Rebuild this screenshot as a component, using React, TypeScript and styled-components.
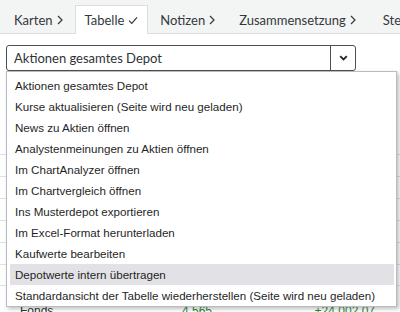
import React from 'react';
import styled, { createGlobalStyle } from 'styled-components';

const GlobalStyle = createGlobalStyle`
  html, body {
    margin: 0;
    padding: 0;
    background: #ffffff;
    overflow: hidden;
  }
  * {
    box-sizing: border-box;
  }
`;

const Page = styled.div`
  width: 400px;
  height: 312px;
  overflow: hidden;
  position: relative;
  font-family: Lato, 'Liberation Sans', sans-serif;
  color: #2f3336;
`;

const TabBar = styled.div`
  display: flex;
  align-items: flex-end;
  height: 34px;
  padding-left: 2px;
  background: #f3f4f4;
  border-bottom: 1px solid #dcdedf;
  white-space: nowrap;
`;

const Tab = styled.div<{ $active?: boolean }>`
  display: flex;
  align-items: center;
  gap: 4px;
  height: ${(p) => (p.$active ? '29px' : '28px')};
  margin-bottom: ${(p) => (p.$active ? '-1px' : '0')};
  padding: 0 ${(p) => (p.$active ? '9px' : '11px')};
  background: ${(p) => (p.$active ? '#ffffff' : 'transparent')};
  border: 1px solid ${(p) => (p.$active ? '#dcdedf' : 'transparent')};
  border-bottom: none;
  font-size: 13px;
  color: #34393c;
  flex-shrink: 0;

  &:nth-child(4) {
    padding-right: 14px;
  }
`;

const Content = styled.div`
  position: relative;
  padding: 11px 6px 0 6px;
`;

const Select = styled.div`
  display: flex;
  width: 350px;
  height: 26px;
  border: 1px solid #4b5154;
  border-radius: 3px;
  background: #ffffff;
`;

const SelectValue = styled.div`
  flex: 1;
  display: flex;
  align-items: center;
  padding-left: 7px;
  font-size: 13px;
  color: #2f3336;
`;

const SelectToggle = styled.div`
  width: 25px;
  display: flex;
  align-items: center;
  justify-content: center;
  border-left: 1px solid #4b5154;
`;

const Table = styled.div`
  margin: 0 -6px;
  font-family: 'Liberation Sans', Arial, sans-serif;
  font-size: 12px;
`;

const TableRow = styled.div<{ $h: number }>`
  display: flex;
  align-items: center;
  height: ${(p) => p.$h}px;
  border-bottom: 1px solid #dfe1e2;
  padding: 0 20px;
`;

const Cell = styled.div<{ $w: number; $color?: string; $align?: string }>`
  width: ${(p) => p.$w}px;
  color: ${(p) => p.$color || '#2f3336'};
  text-align: ${(p) => p.$align || 'left'};
  flex-shrink: 0;
`;

const Menu = styled.ul`
  position: absolute;
  top: 37px;
  left: 6px;
  width: 391px;
  margin: 0;
  padding: 3px 2px 0 3px;
  list-style: none;
  background: #ffffff;
  border: 1px solid #b9bcbe;
  box-shadow: 2px 2px 4px rgba(0, 0, 0, 0.25);
  font-family: 'Liberation Sans', Arial, sans-serif;
  font-size: 11.6px;
  color: #1f1f1f;
`;

const MenuItem = styled.li<{ $highlight?: boolean }>`
  height: 21px;
  line-height: 21px;
  padding-left: 5px;
  white-space: nowrap;
  background: ${(p) => (p.$highlight ? '#e2e2e6' : 'transparent')};
`;

const Chevron = () => (
  <svg width="9" height="6" viewBox="0 0 9 6">
    <path d="M1.2 1.2 L4.5 4.4 L7.8 1.2" fill="none" stroke="#1f2326" strokeWidth="1.8" />
  </svg>
);

const TabArrow = () => (
  <svg width="6" height="10" viewBox="0 0 6 10">
    <path d="M1 1 L5 5 L1 9" fill="none" stroke="#34393c" strokeWidth="1.2" />
  </svg>
);

const Check = () => (
  <svg width="10" height="9" viewBox="0 0 10 9">
    <path d="M1 4.6 L3.8 7.4 L9 1.4" fill="none" stroke="#34393c" strokeWidth="1.2" />
  </svg>
);

const tabs = [
  { label: 'Karten', active: false },
  { label: 'Tabelle', active: true },
  { label: 'Notizen', active: false },
  { label: 'Zusammensetzung', active: false },
  { label: 'Steuern', active: false },
];

const items = [
  'Aktionen gesamtes Depot',
  'Kurse aktualisieren (Seite wird neu geladen)',
  'News zu Aktien öffnen',
  'Analystenmeinungen zu Aktien öffnen',
  'Im ChartAnalyzer öffnen',
  'Im Chartvergleich öffnen',
  'Ins Musterdepot exportieren',
  'Im Excel-Format herunterladen',
  'Kaufwerte bearbeiten',
  'Depotwerte intern übertragen',
  'Standardansicht der Tabelle wiederherstellen (Seite wird neu geladen)',
];

// rows sit behind the open menu; only their edges and the last row peek out
const rows = [
  { h: 84, name: '', a: '', b: '' },
  { h: 22, name: '', a: '', b: '' },
  { h: 22, name: '', a: '', b: '' },
  { h: 22, name: '', a: '', b: '' },
  { h: 22, name: '', a: '', b: '' },
  { h: 22, name: '', a: '', b: '' },
  { h: 21, name: '', a: '', b: '' },
  { h: 50, name: 'Fonds', a: '4.565', b: '+24.002,07' },
];

export default function App() {
  return (
    <Page>
      <GlobalStyle />
      <TabBar>
        {tabs.map((t) => (
          <Tab key={t.label} $active={t.active}>
            {t.label}
            {t.active ? <Check /> : <TabArrow />}
          </Tab>
        ))}
      </TabBar>
      <Content>
        <Select>
          <SelectValue>Aktionen gesamtes Depot</SelectValue>
          <SelectToggle>
            <Chevron />
          </SelectToggle>
        </Select>
        <Table>
          {rows.map((r, i) => (
            <TableRow key={i} $h={r.h}>
              <Cell $w={140}>{r.name}</Cell>
              <Cell $w={52} $color="#2e8b3a" $align="right">{r.a}</Cell>
              <Cell $w={163} $color="#2e8b3a" $align="right">{r.b}</Cell>
            </TableRow>
          ))}
        </Table>
        <Menu>
          {items.map((it, i) => (
            <MenuItem key={it} $highlight={i === 9}>
              {it}
            </MenuItem>
          ))}
        </Menu>
      </Content>
    </Page>
  );
}
